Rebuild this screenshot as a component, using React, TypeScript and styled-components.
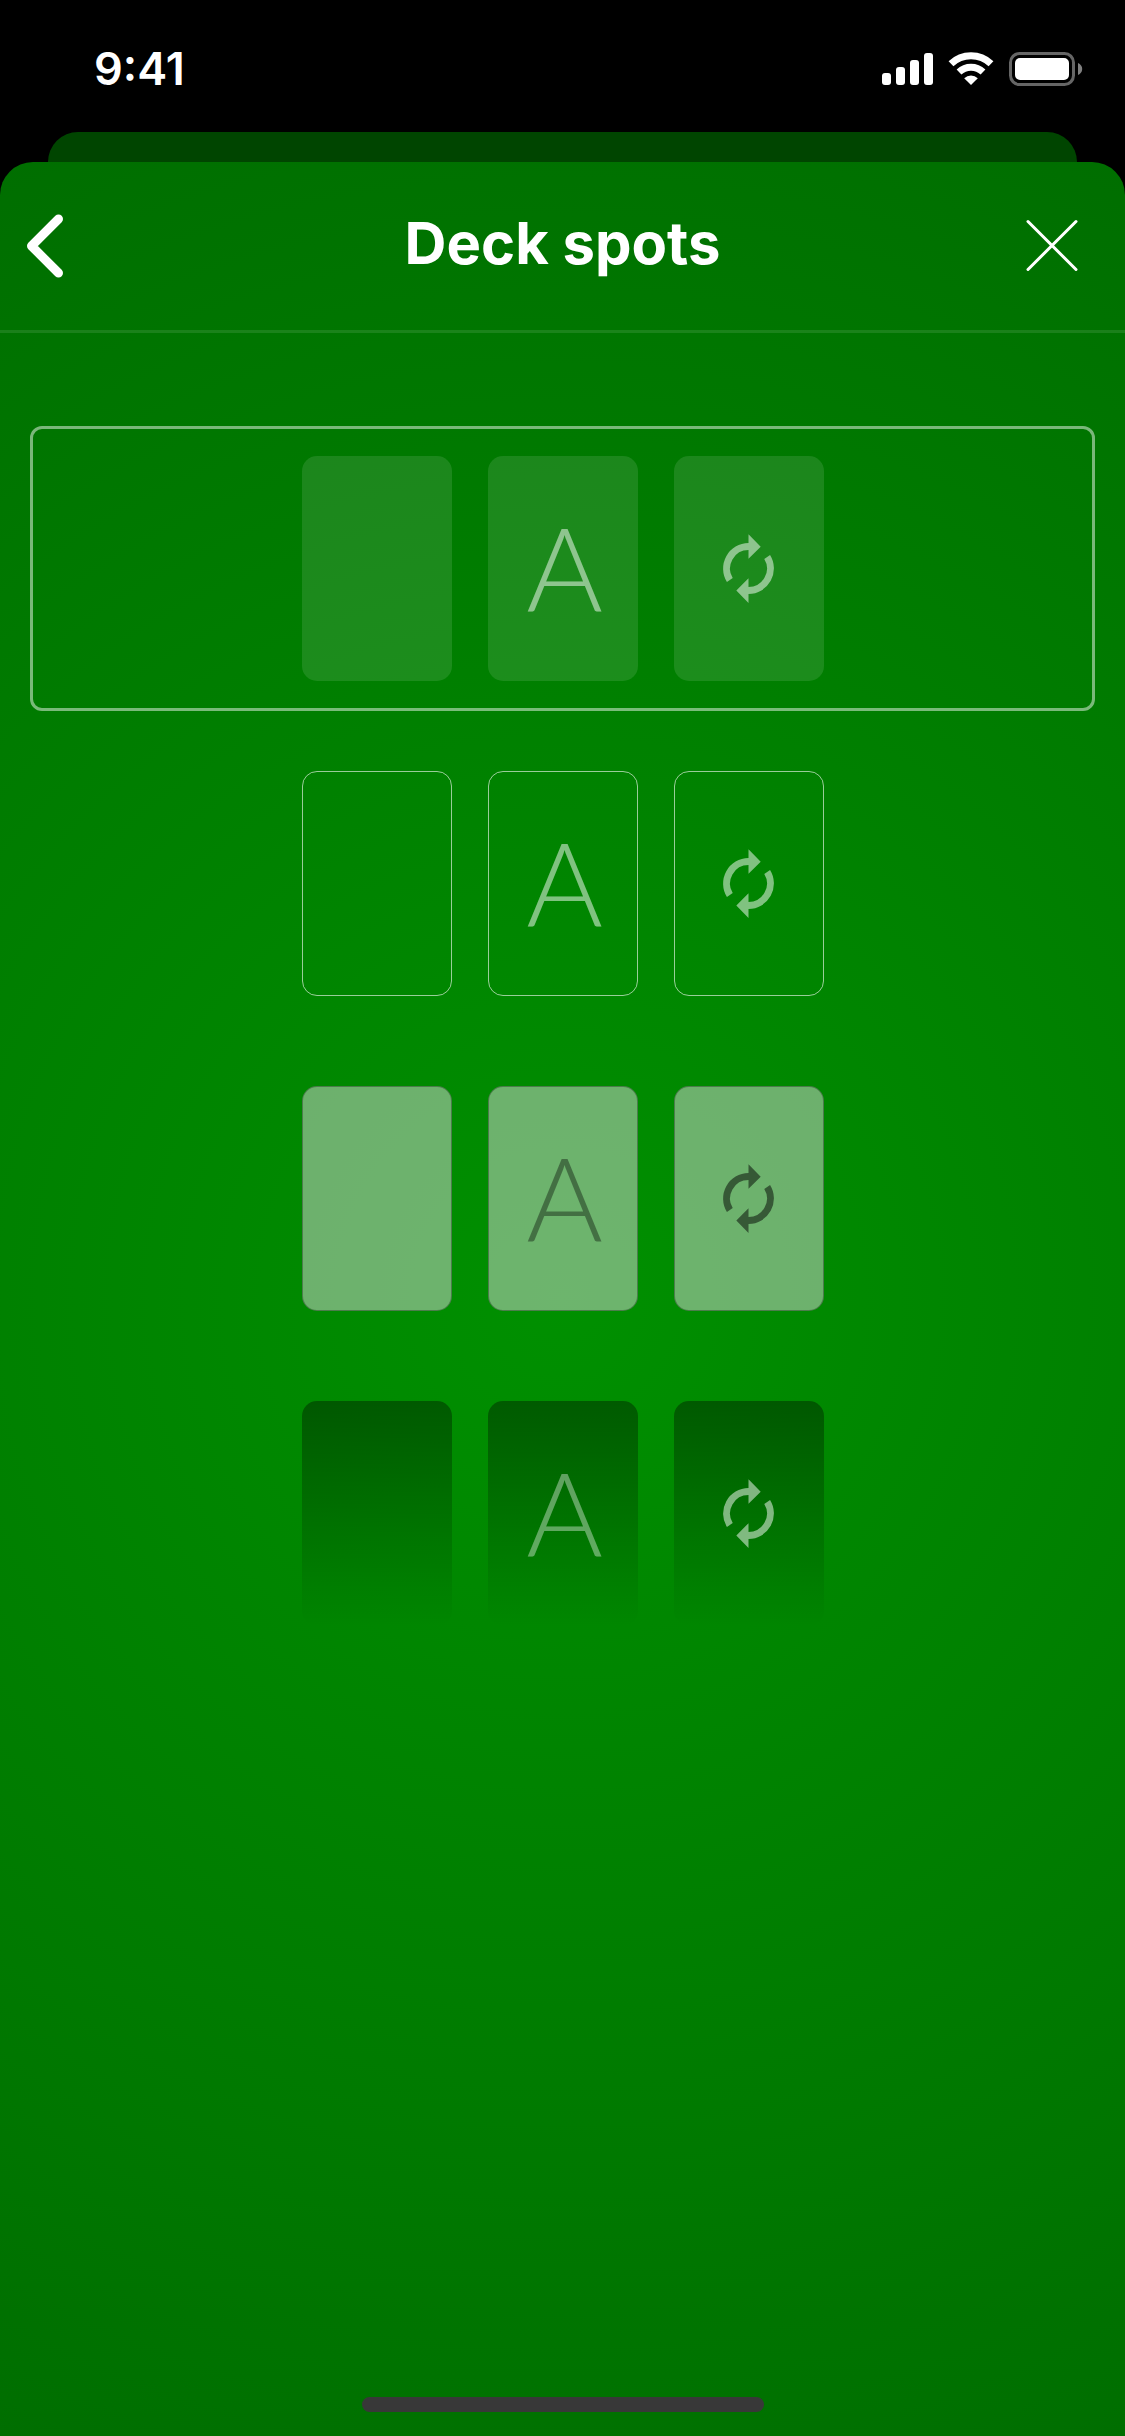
import React, { useState } from "react";
import styled, { createGlobalStyle, css } from "styled-components";

const GlobalStyle = createGlobalStyle`
  *, *::before, *::after {
    box-sizing: border-box;
  }

  body {
    margin: 0;
    background: #000;
    color: #fff;
    font-family: Inter, "Liberation Sans", sans-serif;
  }
`;

type SpotKind = "tinted" | "outlined" | "solid" | "shaded";

const spotKinds: { kind: SpotKind; label: string }[] = [
  { kind: "tinted", label: "Tinted" },
  { kind: "outlined", label: "Outlined" },
  { kind: "solid", label: "Solid" },
  { kind: "shaded", label: "Shaded" },
];

const Screen = styled.div`
  display: flex;
  flex-direction: column;
  min-height: 100vh;
`;

const StatusBar = styled.div`
  display: flex;
  align-items: center;
  justify-content: space-between;
  height: 132px;
  padding: 6px 42px 0 94px;
`;

const Clock = styled.time`
  font-size: 45px;
  font-weight: 600;
  line-height: 54px;
`;

const StatusIcons = styled.div`
  display: flex;
  align-items: center;
  gap: 15px;
`;

const PreviousSheet = styled.div`
  height: 30px;
  margin: 0 48px;
  border-radius: 30px 30px 0 0;
  background: #004500;
`;

const Sheet = styled.main`
  display: flex;
  flex: 1;
  flex-direction: column;
  border-radius: 33px 33px 0 0;
  background: radial-gradient(circle farthest-corner, #009000, #006e00);
`;

const Header = styled.header`
  display: grid;
  grid-template-columns: 1fr auto 1fr;
  align-items: center;
  height: 171px;
  padding: 0 24px;
  border-bottom: 3px solid rgba(255, 255, 255, 0.1);
`;

const Title = styled.h1`
  margin: 0;
  padding-bottom: 6px;
  font-size: 58px;
  font-weight: 700;
  line-height: 72px;
`;

const IconButton = styled.button<{ $end?: boolean }>`
  display: flex;
  padding: 0;
  border: 0;
  background: none;
  color: inherit;
  cursor: pointer;
  justify-self: ${({ $end }) => ($end ? "end" : "start")};
  margin-right: ${({ $end }) => ($end ? "21px" : "0")};
`;

const Options = styled.div`
  display: flex;
  flex-direction: column;
  gap: 30px;
  padding: 93px 30px 30px;
`;

const Option = styled.button<{ $selected: boolean }>`
  display: flex;
  justify-content: center;
  gap: 36px;
  padding: 27px;
  border: 3px solid ${({ $selected }) => ($selected ? "rgba(255, 255, 255, 0.48)" : "transparent")};
  border-radius: 12px;
  background: none;
  color: inherit;
  font: inherit;
  cursor: pointer;
`;

const spotStyles = {
  tinted: css`
    background: rgba(255, 255, 255, 0.11);
    color: rgba(255, 255, 255, 0.5);
  `,
  outlined: css`
    border: 1px solid rgba(255, 255, 255, 0.6);
    color: rgba(255, 255, 255, 0.5);
  `,
  solid: css`
    border: 1px solid rgba(0, 0, 0, 0.3);
    background: rgba(217, 217, 217, 0.5);
    color: rgba(0, 0, 0, 0.5);
  `,
  shaded: css`
    background: linear-gradient(rgba(0, 0, 0, 0.36), rgba(0, 0, 0, 0));
    color: rgba(255, 255, 255, 0.5);
  `,
};

const Spot = styled.span<{ $kind: SpotKind }>`
  display: flex;
  align-items: center;
  justify-content: center;
  width: 150px;
  height: 225px;
  border-radius: 15px;
  ${({ $kind }) => spotStyles[$kind]}
`;

const Letter = styled.span<{ $soft: boolean }>`
  padding: 0 0 3px 4px;
  font-family: Lato, Inter, sans-serif;
  font-size: 117px;
  font-weight: 300;
  line-height: 138px;
  opacity: ${({ $soft }) => ($soft ? 0.75 : 1)};
`;

const HomeArea = styled.div`
  display: flex;
  justify-content: center;
  margin-top: auto;
  padding-bottom: 24px;
`;

const HomeIndicator = styled.div`
  width: 402px;
  height: 15px;
  border-radius: 8px;
  background: #383838;
`;

const SignalIcon = () => (
  <svg width="51" height="34" viewBox="0 0 51 34" fill="#fff" aria-hidden="true">
    <rect x="0" y="21" width="9" height="12" rx="3" />
    <rect x="14" y="15" width="9" height="18" rx="3" />
    <rect x="28" y="8" width="9" height="25" rx="3" />
    <rect x="42" y="1" width="9" height="32" rx="3" />
  </svg>
);

const WifiIcon = () => (
  <svg width="46" height="34" viewBox="0 0 46 34" fill="none" aria-hidden="true">
    <path d="M3 11.800a29 29 0 0 1 40 0" stroke="#fff" strokeWidth="7" />
    <path d="M11 20a17.500 17.500 0 0 1 24 0" stroke="#fff" strokeWidth="7" />
    <path d="M16.200 26.200a10 10 0 0 1 13.600 0L23 33z" fill="#fff" />
  </svg>
);

const BatteryIcon = () => (
  <svg width="74" height="34" viewBox="0 0 74 34" fill="none" aria-hidden="true">
    <rect x="1.5" y="1.5" width="63" height="31" rx="9" stroke="#fff" strokeOpacity="0.4" strokeWidth="3" />
    <rect x="6" y="6" width="54" height="22" rx="5" fill="#fff" />
    <path d="M69 11c2.600 1 4.200 3.400 4.200 6s-1.600 5-4.200 6z" fill="#fff" fillOpacity="0.5" />
  </svg>
);

const BackIcon = () => (
  <svg width="42" height="66" viewBox="0 0 42 66" fill="none" aria-hidden="true">
    <path
      d="M34.500 6 7.500 33l27 27"
      stroke="currentColor"
      strokeWidth="9"
      strokeLinecap="round"
      strokeLinejoin="round"
    />
  </svg>
);

const CloseIcon = () => (
  <svg width="56" height="56" viewBox="0 0 56 56" fill="none" aria-hidden="true">
    <path d="M4 3.500l48 48M52 3.500l-48 48" stroke="currentColor" strokeWidth="3" strokeLinecap="round" />
  </svg>
);

const RenewIcon = () => (
  <svg width="75" height="75" viewBox="0 0 24 24" fill="currentColor" aria-hidden="true">
    <path d="M12 6.100V8.900L15.900 5 12 1V3.850A8.150 8.150 0 0 0 5.100 16.300L6.950 15.050A5.900 5.900 0 0 1 12 6.100Z" />
    <path d="M12 17.900V15.100L8.100 19 12 23V20.150A8.150 8.150 0 0 0 18.900 7.700L17.050 8.950A5.900 5.900 0 0 1 12 17.900Z" />
  </svg>
);

export default function App() {
  const [selected, setSelected] = useState<SpotKind>("tinted");

  return (
    <Screen>
      <GlobalStyle />
      <StatusBar>
        <Clock>9:41</Clock>
        <StatusIcons>
          <SignalIcon />
          <WifiIcon />
          <BatteryIcon />
        </StatusIcons>
      </StatusBar>
      <PreviousSheet />
      <Sheet>
        <Header>
          <IconButton type="button" aria-label="Back">
            <BackIcon />
          </IconButton>
          <Title>Deck spots</Title>
          <IconButton type="button" aria-label="Close" $end>
            <CloseIcon />
          </IconButton>
        </Header>
        <Options>
          {spotKinds.map(({ kind, label }) => (
            <Option
              key={kind}
              type="button"
              aria-label={label}
              aria-pressed={selected === kind}
              $selected={selected === kind}
              onClick={() => setSelected(kind)}
            >
              <Spot $kind={kind} />
              <Spot $kind={kind}>
                <Letter $soft={kind === "solid" || kind === "shaded"}>A</Letter>
              </Spot>
              <Spot $kind={kind}>
                <RenewIcon />
              </Spot>
            </Option>
          ))}
        </Options>
        <HomeArea>
          <HomeIndicator />
        </HomeArea>
      </Sheet>
    </Screen>
  );
}
